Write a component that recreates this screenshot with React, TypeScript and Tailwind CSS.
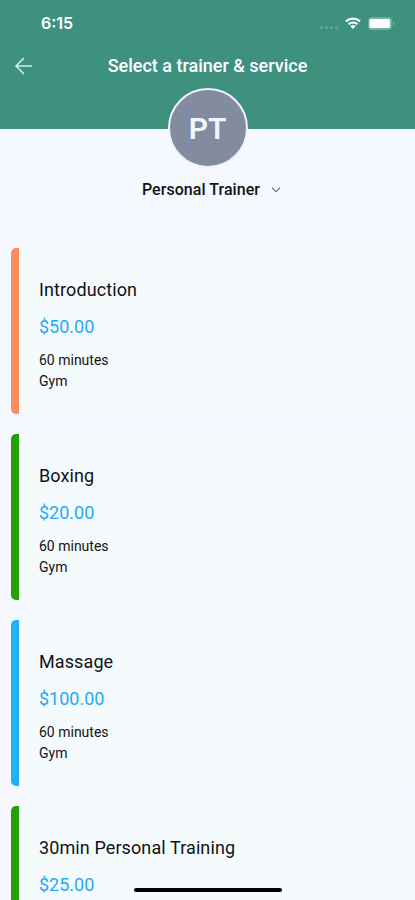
interface Service {
  name: string;
  price: string;
  duration?: string;
  location?: string;
  color: string;
}

const services: Service[] = [
  {
    name: "Introduction",
    price: "$50.00",
    duration: "60 minutes",
    location: "Gym",
    color: "bg-[#ff8c5d]",
  },
  {
    name: "Boxing",
    price: "$20.00",
    duration: "60 minutes",
    location: "Gym",
    color: "bg-[#22a006]",
  },
  {
    name: "Massage",
    price: "$100.00",
    duration: "60 minutes",
    location: "Gym",
    color: "bg-[#1fb2f8]",
  },
  {
    name: "30min Personal Training",
    price: "$25.00",
    color: "bg-[#22a006]",
  },
];

function StatusBar() {
  return (
    <div className="flex h-[46px] items-center justify-between pl-[41px] pr-[20px]">
      <span className="font-['Inter',sans-serif] text-[16px] font-semibold leading-none">
        6:15
      </span>
      <div className="flex items-center">
        <div className="mr-[7px] mt-[8px] flex gap-[2px] opacity-20">
          <span className="h-[3px] w-[3px] rounded-full bg-white" />
          <span className="h-[3px] w-[3px] rounded-full bg-white" />
          <span className="h-[3px] w-[3px] rounded-full bg-white" />
          <span className="h-[3px] w-[3px] rounded-full bg-white" />
        </div>
        <svg width="16" height="12" viewBox="0 0 16 12" fill="none">
          <path d="M1 4.4a10.2 10.2 0 0 1 14 0" stroke="white" strokeWidth="2.3" />
          <path d="M3.5 7.2a6.5 6.5 0 0 1 9 0" stroke="white" strokeWidth="2" />
          <path d="M8 12 5.4 9.3a3.8 3.8 0 0 1 5.2 0Z" fill="white" />
        </svg>
        <svg className="ml-[7px]" width="27" height="13" viewBox="0 0 27 13">
          <rect x="0.5" y="0.5" width="23" height="12" rx="3" fill="white" fillOpacity="0.3" stroke="white" strokeOpacity="0.15" />
          <rect x="1.5" y="2" width="20.5" height="9" rx="1.5" fill="white" />
          <path d="M25 4.5c1.6.6 1.6 3.4 0 4Z" fill="white" fillOpacity="0.4" />
        </svg>
      </div>
    </div>
  );
}

function ServiceCard({ service }: { service: Service }) {
  return (
    <div className="flex h-[166px] shrink-0 overflow-hidden rounded-[5px] bg-[#f5fafd]">
      <div className={`w-[7.5px] shrink-0 ${service.color}`} />
      <div className="pl-[20.5px] pt-[29.5px]">
        <h2 className="text-[18px] leading-6 tracking-[0.1px]">{service.name}</h2>
        <p className="mt-[13px] text-[18px] leading-6 text-[#27a9f5]">
          {service.price}
        </p>
        {service.duration && (
          <p className="mt-[11px] text-[14px] leading-[21px]">{service.duration}</p>
        )}
        {service.location && (
          <p className="text-[14px] leading-[21px]">{service.location}</p>
        )}
      </div>
    </div>
  );
}

export default function App() {
  return (
    <div className="relative h-[900px] w-[415px] overflow-hidden bg-[#f5f9ff] font-['Roboto',sans-serif] text-[#111315]">
      <header className="h-[129px] bg-[#3e917f] text-white">
        <StatusBar />
        <div className="flex h-[40px] items-center">
          <button className="ml-[14px] w-[18px]">
            <svg width="19" height="18" viewBox="0 0 19 18" fill="none" stroke="#d5efe6" strokeWidth="1.5">
              <path d="M18 9H2M10 1 2 9l8 8" />
            </svg>
          </button>
          <h1 className="flex-1 pb-[2px] pr-[32px] text-center text-[18px] font-medium">
            Select a trainer &amp; service
          </h1>
        </div>
      </header>

      {/* Trainer */}
      <div className="-mt-[41px] flex flex-col items-center">
        <div className="flex h-[80px] w-[80px] items-center justify-center rounded-full border-2 border-[#eef3fa] bg-[#838b9e] text-[30px] font-semibold text-[#f2f6fd]">
          PT
        </div>
        <button className="mt-[10px] flex h-6 items-center gap-[11px] pl-[8px] text-[16px] font-medium tracking-[0.05px]">
          Personal Trainer
          <svg width="10" height="6" viewBox="0 0 10 6" fill="none" stroke="#596273" strokeWidth="1.1">
            <path d="M1 .7 5 4.8 9 .7" />
          </svg>
        </button>
      </div>

      {/* Services */}
      <main className="mt-[46px] flex flex-col gap-5 px-[11px]">
        {services.map((service) => (
          <ServiceCard key={service.name} service={service} />
        ))}
      </main>

      {/* Home indicator */}
      <div className="absolute bottom-[8px] left-[134px] h-[4px] w-[148px] rounded-full bg-black" />
    </div>
  );
}
